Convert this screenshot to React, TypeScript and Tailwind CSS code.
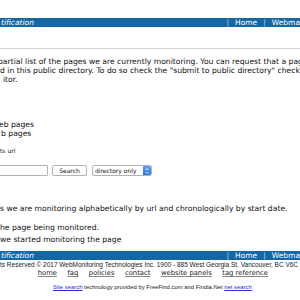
import React from "react";

const Bar = () => (
  <div className="flex h-[9px] items-center whitespace-nowrap bg-[#1467a5] text-[7.5px] leading-[9px] text-white">
    <span className="w-[226.5px] shrink-0 pl-px italic">tification</span>
    <span className="text-[#b9cfe3]">|</span>
    <span className="ml-[6px]">Home</span>
    <span className="ml-[6px] text-[#b9cfe3]">|</span>
    <span className="ml-[6px]">Webmaster Tools</span>
  </div>
);

const Stepper = () => (
  <div className="flex h-full w-[8px] items-center justify-center rounded-r-[2px] bg-gradient-to-b from-[#5aa4f7] to-[#1c6fe6]">
    <svg width="6" height="8" viewBox="0 0 6 8" fill="none">
      <path d="M1.5 3 L3 1.5 L4.5 3" stroke="white" strokeWidth="0.9" />
      <path d="M1.5 5 L3 6.5 L4.5 5" stroke="white" strokeWidth="0.9" />
    </svg>
  </div>
);

const footerLinks = ["home", "faq", "policies", "contact", "website panels", "tag reference"];

export default function App() {
  return (
    <div className="h-[300px] w-[300px] overflow-hidden bg-white pt-[18px] font-['DejaVu_Sans',sans-serif] text-[7.65px] leading-[9px] text-[#111]">
      <Bar />
      <div className="mt-[21px] h-px bg-[#d6d6d6]" />

      <div className="mt-[8px] whitespace-nowrap">
        <p className="-ml-[2px]">
          partial list of the pages we are currently monitoring. You can request that a page be
        </p>
        <p>d in this public directory. To do so check the "submit to public directory" checkbox</p>
        <p className="ml-[3px]">itor.</p>
      </div>

      <div className="mt-[36px] whitespace-nowrap">
        <p className="-ml-px">eb pages</p>
        <p className="ml-px">b pages</p>
      </div>

      <p className="mt-[8px] whitespace-nowrap text-[6px]">ts url</p>

      <div className="mt-[10px] flex h-[11px] items-stretch text-[6px] leading-[9px]">
        <div className="-ml-[2px] w-[50px] rounded-[1px] border border-[#b3b3b3] bg-white" />
        <button className="ml-[4px] w-[35px] rounded-[2px] border border-[#b3b3b3] bg-white text-center text-[#111]">
          Search
        </button>
        <div className="ml-[4.5px] flex w-[60px] items-stretch rounded-[2px] border border-[#b3b3b3] bg-white">
          <span className="flex-1 whitespace-nowrap pl-[2.5px]">directory only</span>
          <Stepper />
        </div>
      </div>

      <p className="mt-[28px] whitespace-nowrap">
        s we are monitoring alphabetically by url and chronologically by start date.
      </p>
      <p className="mt-[10px] whitespace-nowrap">he page being monitored.</p>
      <p className="mt-[3px] whitespace-nowrap">we started monitoring the page</p>

      <div className="mt-[7px]">
        <Bar />
      </div>

      <p className="mt-px whitespace-nowrap font-['Liberation_Sans',sans-serif] text-[6.5px] leading-[7px] text-[#222]">
        ts Reserved © 2017 WebMonitoring Technologies Inc. 1900 - 885 West Georgia St. Vancouver, BC V6C 3E8
      </p>

      <div className="mt-px ml-[37.7px] flex gap-[10.5px] whitespace-nowrap text-[6.8px] leading-[8px] text-[#222]">
        {footerLinks.map((item) => (
          <a key={item} className="underline decoration-[#888]">
            {item}
          </a>
        ))}
      </div>

      <p className="mt-[7px] ml-[53px] whitespace-nowrap font-['Liberation_Sans',sans-serif] text-[5.9px] leading-[7px] text-[#222]">
        <a className="text-[#2a2ae0] underline">Site search</a> technology provided by FreeFind.com and Findia.Net{" "}
        <a className="text-[#2a2ae0] underline">net search</a>
      </p>
    </div>
  );
}
